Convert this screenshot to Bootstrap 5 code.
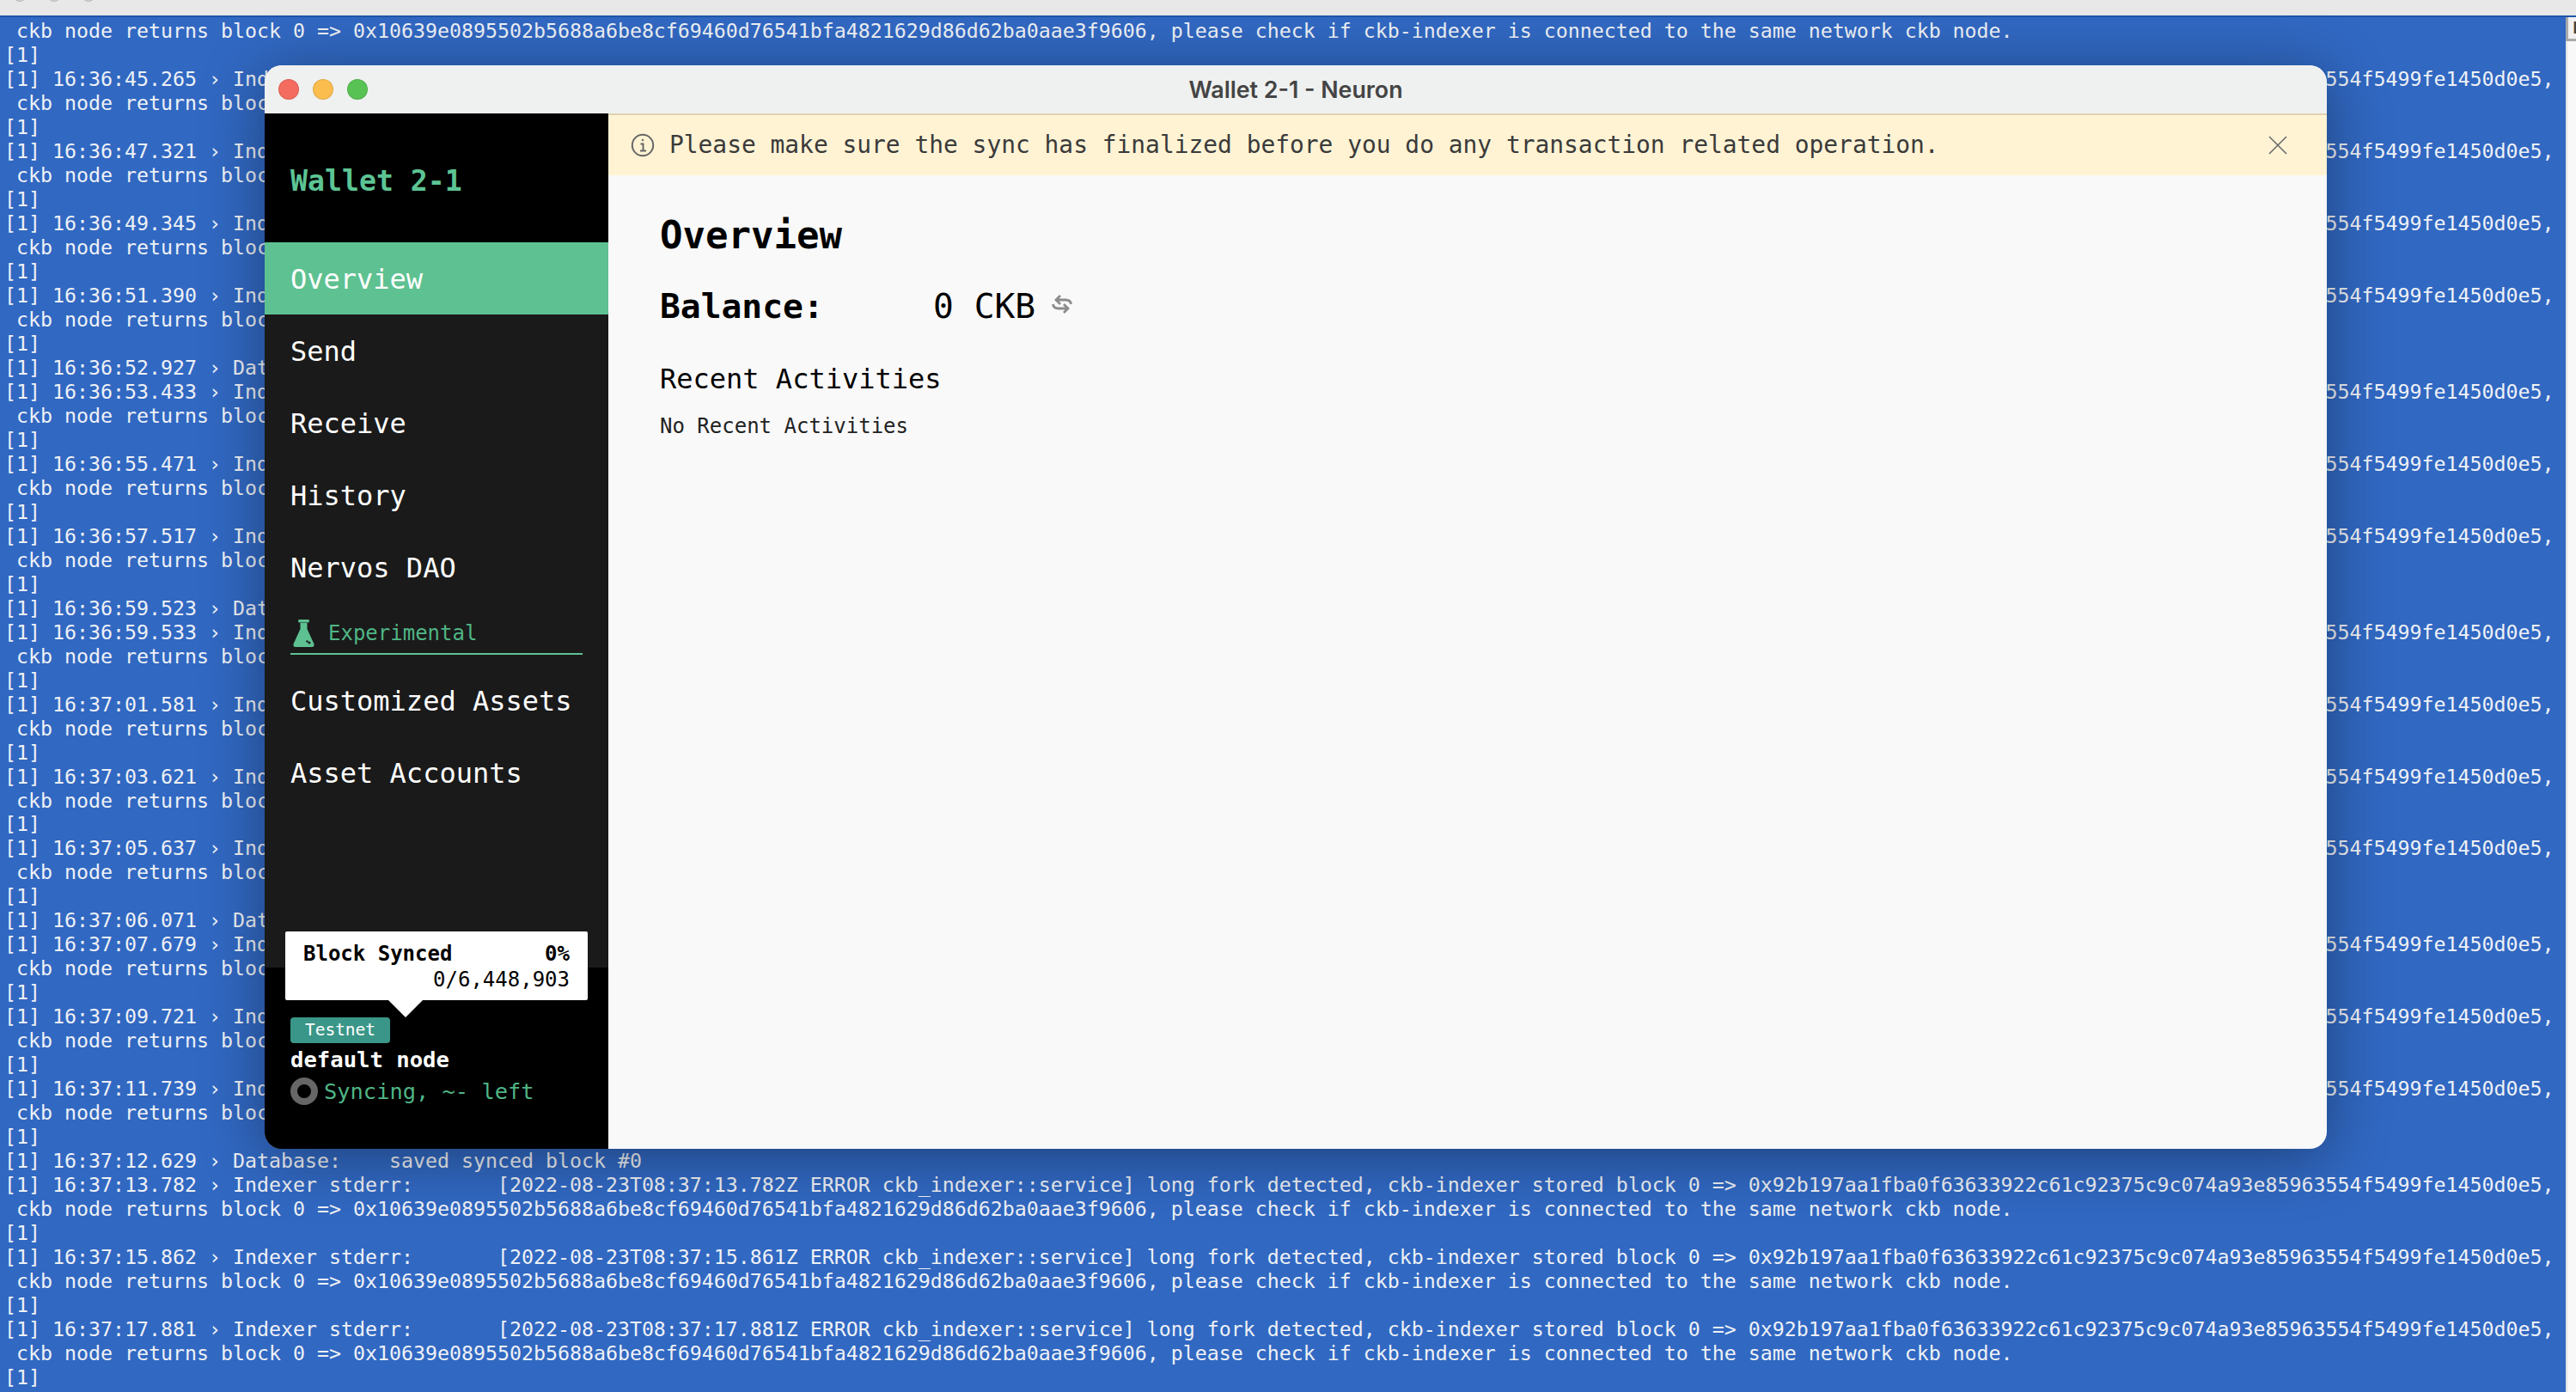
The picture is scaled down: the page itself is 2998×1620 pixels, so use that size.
<!DOCTYPE html>
<html lang="en">
  <head>
    <meta charset="UTF-8" />
    <meta name="viewport" content="width=device-width, initial-scale=1.0" />
    <title>Wallet 2-1 - Neuron</title>
    <link href="https://cdn.jsdelivr.net/npm/bootstrap@5.3.0/dist/css/bootstrap.min.css" rel="stylesheet" />
    <style>
      html, body { height: 100%; overflow: hidden; }
      body { background: #f5f5f5; font-family: "DejaVu Sans Mono", monospace; }

      /* Terminal behind the app window */
      .top-strip { height: 18px; background: #e7e8e7; position: relative; flex: none; padding-left: 15px; gap: 24px; }
      .top-strip i { width: 16px; height: 16px; margin-top: -14px; border-radius: 50%; background: #d4d5d4; border: 1px solid #b5b5b5; display: block; }
      .term-wrap { border-top: 2px solid #1f55aa; min-height: 0; }
      .term-side { width: 12px; background: #f8f8f8; border-left: 2px solid #e2e2e2; }
      .term-side span { display: block; height: 28px; margin-left: -2px; border-left: 3px solid #aaa; border-bottom: 3px solid #aaa; background: #f0f0f0; color: #444; font-size: 20px; font-weight: 700; line-height: 24px; overflow: hidden; padding-left: 5px; }
      .term-log {
        margin: 0;
        padding: 2px 0 0 5px;
        background: #3168c2;
        color: #eef1f6;
        font-family: "DejaVu Sans Mono", monospace;
        font-size: 23.25px;
        line-height: 27.98px;
        white-space: pre;
        overflow: hidden;
      }

      /* App window */
      .app-win {
        position: absolute;
        left: 308px;
        top: 76px;
        width: 2400px;
        height: 1261px;
        border-radius: 20px;
        overflow: hidden;
        box-shadow: 0 10px 70px rgba(0, 0, 0, 0.38);
        background: #f9f9f9;
      }
      .win-title { height: 56px; background: #eff1f0; position: relative; flex: none; }
      .win-title h1 { font-family: Inter, "Liberation Sans", sans-serif; font-size: 26.8px; font-weight: 600; color: #444; margin: 0; }
      .light { width: 24px; height: 24px; border-radius: 50%; border: 1px solid rgba(0, 0, 0, 0.1); }
      .lights { position: absolute; left: 16px; top: 16px; gap: 16px; }

      .side-bar { width: 400px; background: #1a1a1a; color: #fff; flex: none; }
      .side-head { height: 150px; background: #000; padding: 7px 30px 0; color: #5cc494; font-size: 33.2px; font-weight: 700; }
      .side-bar .nav-link { height: 84px; padding: 1px 30px 0; font-size: 32px; color: #fff; display: flex; align-items: center; }
      .side-bar .nav-link.is-on { background: #5ec191; }
      .exp-head { height: 60px; margin: 0 30px 11px; border-bottom: 2px solid #5ec191; color: #4fb585; font-size: 24px; gap: 16px; padding-top: 12px; }
      .exp-head svg { margin-left: 3px; }
      .side-foot { height: 211px; background: #000; padding: 58px 30px 0; position: relative; }
      .sync-pop {
        position: absolute;
        left: 24px;
        top: -42px;
        width: 352px;
        height: 80px;
        background: #fff;
        color: #000;
        border-radius: 2px;
        padding: 11px 21px 0;
        font-size: 24px;
        line-height: 30px;
      }
      .sync-pop::after {
        content: "";
        position: absolute;
        left: 120px;
        top: 80px;
        border: 20px solid transparent;
        border-top-color: #fff;
        border-bottom: 0;
      }
      .net-tag { width: 116px; height: 30px; background: #3a9688; border-radius: 4px; color: #fff; font-size: 19.5px; font-weight: 400; line-height: 30px; display: block; padding: 0; text-align: center; }
      .node-name { font-size: 25.6px; font-weight: 700; line-height: 32px; margin-top: 3px; color: #fff; }
      .sync-line { color: #4fb585; font-size: 25.4px; line-height: 32px; gap: 7px; margin-top: 5px; }
      .sync-ring { width: 32px; height: 32px; border: 8px solid #666; border-radius: 50%; flex: none; }

      .note-bar { height: 72px; background: #fff3d4; border-top: 2px solid #dfd2b2; padding: 0 46px 0 26px; color: #3a3a3a; font-size: 27.9px; gap: 17px; flex: none; }
      .page-body { padding: 43px 0 0 60px; color: #000; }
      .page-body h2 { font-size: 44px; font-weight: 700; line-height: 53px; margin: 0 0 33px; }
      .bal-line { font-size: 39.6px; line-height: 47px; margin-bottom: 42px; }
      .bal-line b { width: 318px; }
      .bal-line svg { margin: 0 0 6px 19px; }
      .page-body h3 { font-size: 32px; font-weight: 400; line-height: 38px; margin: 0 0 21px; }
      .page-body p { font-size: 24px; line-height: 30px; margin: 0; color: #222; }
    </style>
  </head>
  <body class="d-flex flex-column">
    <div class="top-strip d-flex">
      <i></i><i></i><i></i>
    </div>
    <div class="term-wrap d-flex flex-grow-1">
      <pre class="term-log flex-grow-1"> ckb node returns block 0 => 0x10639e0895502b5688a6be8cf69460d76541bfa4821629d86d62ba0aae3f9606, please check if ckb-indexer is connected to the same network ckb node.
[1]
[1] 16:36:45.265 › Indexer stderr:       [2022-08-23T08:36:45.265Z ERROR ckb_indexer::service] long fork detected, ckb-indexer stored block 0 => 0x92b197aa1fba0f63633922c61c92375c9c074a93e85963554f5499fe1450d0e5,
 ckb node returns block 0 => 0x10639e0895502b5688a6be8cf69460d76541bfa4821629d86d62ba0aae3f9606, please check if ckb-indexer is connected to the same network ckb node.
[1]
[1] 16:36:47.321 › Indexer stderr:       [2022-08-23T08:36:47.321Z ERROR ckb_indexer::service] long fork detected, ckb-indexer stored block 0 => 0x92b197aa1fba0f63633922c61c92375c9c074a93e85963554f5499fe1450d0e5,
 ckb node returns block 0 => 0x10639e0895502b5688a6be8cf69460d76541bfa4821629d86d62ba0aae3f9606, please check if ckb-indexer is connected to the same network ckb node.
[1]
[1] 16:36:49.345 › Indexer stderr:       [2022-08-23T08:36:49.345Z ERROR ckb_indexer::service] long fork detected, ckb-indexer stored block 0 => 0x92b197aa1fba0f63633922c61c92375c9c074a93e85963554f5499fe1450d0e5,
 ckb node returns block 0 => 0x10639e0895502b5688a6be8cf69460d76541bfa4821629d86d62ba0aae3f9606, please check if ckb-indexer is connected to the same network ckb node.
[1]
[1] 16:36:51.390 › Indexer stderr:       [2022-08-23T08:36:51.390Z ERROR ckb_indexer::service] long fork detected, ckb-indexer stored block 0 => 0x92b197aa1fba0f63633922c61c92375c9c074a93e85963554f5499fe1450d0e5,
 ckb node returns block 0 => 0x10639e0895502b5688a6be8cf69460d76541bfa4821629d86d62ba0aae3f9606, please check if ckb-indexer is connected to the same network ckb node.
[1]
[1] 16:36:52.927 › Database:    saved synced block #0
[1] 16:36:53.433 › Indexer stderr:       [2022-08-23T08:36:53.433Z ERROR ckb_indexer::service] long fork detected, ckb-indexer stored block 0 => 0x92b197aa1fba0f63633922c61c92375c9c074a93e85963554f5499fe1450d0e5,
 ckb node returns block 0 => 0x10639e0895502b5688a6be8cf69460d76541bfa4821629d86d62ba0aae3f9606, please check if ckb-indexer is connected to the same network ckb node.
[1]
[1] 16:36:55.471 › Indexer stderr:       [2022-08-23T08:36:55.471Z ERROR ckb_indexer::service] long fork detected, ckb-indexer stored block 0 => 0x92b197aa1fba0f63633922c61c92375c9c074a93e85963554f5499fe1450d0e5,
 ckb node returns block 0 => 0x10639e0895502b5688a6be8cf69460d76541bfa4821629d86d62ba0aae3f9606, please check if ckb-indexer is connected to the same network ckb node.
[1]
[1] 16:36:57.517 › Indexer stderr:       [2022-08-23T08:36:57.517Z ERROR ckb_indexer::service] long fork detected, ckb-indexer stored block 0 => 0x92b197aa1fba0f63633922c61c92375c9c074a93e85963554f5499fe1450d0e5,
 ckb node returns block 0 => 0x10639e0895502b5688a6be8cf69460d76541bfa4821629d86d62ba0aae3f9606, please check if ckb-indexer is connected to the same network ckb node.
[1]
[1] 16:36:59.523 › Database:    saved synced block #0
[1] 16:36:59.533 › Indexer stderr:       [2022-08-23T08:36:59.533Z ERROR ckb_indexer::service] long fork detected, ckb-indexer stored block 0 => 0x92b197aa1fba0f63633922c61c92375c9c074a93e85963554f5499fe1450d0e5,
 ckb node returns block 0 => 0x10639e0895502b5688a6be8cf69460d76541bfa4821629d86d62ba0aae3f9606, please check if ckb-indexer is connected to the same network ckb node.
[1]
[1] 16:37:01.581 › Indexer stderr:       [2022-08-23T08:37:01.581Z ERROR ckb_indexer::service] long fork detected, ckb-indexer stored block 0 => 0x92b197aa1fba0f63633922c61c92375c9c074a93e85963554f5499fe1450d0e5,
 ckb node returns block 0 => 0x10639e0895502b5688a6be8cf69460d76541bfa4821629d86d62ba0aae3f9606, please check if ckb-indexer is connected to the same network ckb node.
[1]
[1] 16:37:03.621 › Indexer stderr:       [2022-08-23T08:37:03.621Z ERROR ckb_indexer::service] long fork detected, ckb-indexer stored block 0 => 0x92b197aa1fba0f63633922c61c92375c9c074a93e85963554f5499fe1450d0e5,
 ckb node returns block 0 => 0x10639e0895502b5688a6be8cf69460d76541bfa4821629d86d62ba0aae3f9606, please check if ckb-indexer is connected to the same network ckb node.
[1]
[1] 16:37:05.637 › Indexer stderr:       [2022-08-23T08:37:05.637Z ERROR ckb_indexer::service] long fork detected, ckb-indexer stored block 0 => 0x92b197aa1fba0f63633922c61c92375c9c074a93e85963554f5499fe1450d0e5,
 ckb node returns block 0 => 0x10639e0895502b5688a6be8cf69460d76541bfa4821629d86d62ba0aae3f9606, please check if ckb-indexer is connected to the same network ckb node.
[1]
[1] 16:37:06.071 › Database:    saved synced block #0
[1] 16:37:07.679 › Indexer stderr:       [2022-08-23T08:37:07.679Z ERROR ckb_indexer::service] long fork detected, ckb-indexer stored block 0 => 0x92b197aa1fba0f63633922c61c92375c9c074a93e85963554f5499fe1450d0e5,
 ckb node returns block 0 => 0x10639e0895502b5688a6be8cf69460d76541bfa4821629d86d62ba0aae3f9606, please check if ckb-indexer is connected to the same network ckb node.
[1]
[1] 16:37:09.721 › Indexer stderr:       [2022-08-23T08:37:09.721Z ERROR ckb_indexer::service] long fork detected, ckb-indexer stored block 0 => 0x92b197aa1fba0f63633922c61c92375c9c074a93e85963554f5499fe1450d0e5,
 ckb node returns block 0 => 0x10639e0895502b5688a6be8cf69460d76541bfa4821629d86d62ba0aae3f9606, please check if ckb-indexer is connected to the same network ckb node.
[1]
[1] 16:37:11.739 › Indexer stderr:       [2022-08-23T08:37:11.739Z ERROR ckb_indexer::service] long fork detected, ckb-indexer stored block 0 => 0x92b197aa1fba0f63633922c61c92375c9c074a93e85963554f5499fe1450d0e5,
 ckb node returns block 0 => 0x10639e0895502b5688a6be8cf69460d76541bfa4821629d86d62ba0aae3f9606, please check if ckb-indexer is connected to the same network ckb node.
[1]
[1] 16:37:12.629 › Database:    saved synced block #0
[1] 16:37:13.782 › Indexer stderr:       [2022-08-23T08:37:13.782Z ERROR ckb_indexer::service] long fork detected, ckb-indexer stored block 0 => 0x92b197aa1fba0f63633922c61c92375c9c074a93e85963554f5499fe1450d0e5,
 ckb node returns block 0 => 0x10639e0895502b5688a6be8cf69460d76541bfa4821629d86d62ba0aae3f9606, please check if ckb-indexer is connected to the same network ckb node.
[1]
[1] 16:37:15.862 › Indexer stderr:       [2022-08-23T08:37:15.861Z ERROR ckb_indexer::service] long fork detected, ckb-indexer stored block 0 => 0x92b197aa1fba0f63633922c61c92375c9c074a93e85963554f5499fe1450d0e5,
 ckb node returns block 0 => 0x10639e0895502b5688a6be8cf69460d76541bfa4821629d86d62ba0aae3f9606, please check if ckb-indexer is connected to the same network ckb node.
[1]
[1] 16:37:17.881 › Indexer stderr:       [2022-08-23T08:37:17.881Z ERROR ckb_indexer::service] long fork detected, ckb-indexer stored block 0 => 0x92b197aa1fba0f63633922c61c92375c9c074a93e85963554f5499fe1450d0e5,
 ckb node returns block 0 => 0x10639e0895502b5688a6be8cf69460d76541bfa4821629d86d62ba0aae3f9606, please check if ckb-indexer is connected to the same network ckb node.
[1]</pre>
      <div class="term-side flex-shrink-0"><span>E</span></div>
    </div>

    <div class="app-win d-flex flex-column">
      <div class="win-title d-flex align-items-center justify-content-center">
        <div class="lights d-flex">
          <span class="light" style="background: #f46b5f"></span>
          <span class="light" style="background: #fabd4e"></span>
          <span class="light" style="background: #58c354"></span>
        </div>
        <h1>Wallet 2-1 - Neuron</h1>
      </div>
      <div class="d-flex flex-grow-1">
        <div class="side-bar d-flex flex-column">
          <div class="side-head d-flex align-items-center">Wallet 2-1</div>
          <nav class="nav flex-column">
            <a class="nav-link is-on" href="#">Overview</a>
            <a class="nav-link" href="#">Send</a>
            <a class="nav-link" href="#">Receive</a>
            <a class="nav-link" href="#">History</a>
            <a class="nav-link" href="#">Nervos DAO</a>
            <div class="exp-head d-flex align-items-center">
              <svg width="25" height="32" viewBox="0 0 25 32" class="flex-shrink-0">
                <rect x="6" y="0" width="13" height="3.500" rx="1.500" fill="#5ec191" />
                <path d="M8.500 4h8v7l8 17.500q.5 3.500-2.500 3.500H3Q0 32 .5 28.500l8-17.500z" fill="#5ec191" />
                <circle cx="16.500" cy="25.500" r="1.300" fill="#1a1a1a" />
                <circle cx="19" cy="27" r="1.500" fill="#1a1a1a" />
              </svg>
              <span>Experimental</span>
            </div>
            <a class="nav-link" href="#">Customized Assets</a>
            <a class="nav-link" href="#">Asset Accounts</a>
          </nav>
          <div class="side-foot mt-auto">
            <div class="sync-pop">
              <div class="d-flex justify-content-between fw-bold"><span>Block Synced</span><span>0%</span></div>
              <div class="text-end">0/6,448,903</div>
            </div>
            <span class="badge net-tag">Testnet</span>
            <div class="node-name">default node</div>
            <div class="sync-line d-flex align-items-center">
              <span class="sync-ring"></span>
              <span>Syncing, ~- left</span>
            </div>
          </div>
        </div>
        <div class="d-flex flex-column flex-grow-1">
          <div class="note-bar d-flex align-items-center">
            <svg width="28" height="28" viewBox="0 0 28 28" class="flex-shrink-0" fill="none" stroke="#666" stroke-width="2">
              <circle cx="14" cy="14" r="12.200" />
              <path d="M11.500 12.500H14.500V20M11 20.500h7" />
              <circle cx="14" cy="8" r="1.200" fill="#666" stroke="none" />
            </svg>
            <span class="flex-grow-1">Please make sure the sync has finalized before you do any transaction related operation.</span>
            <svg width="22" height="22" viewBox="0 0 22 22" class="flex-shrink-0" stroke="#666" stroke-width="1.500">
              <path d="M1 1l20 20M21 1L1 21" />
            </svg>
          </div>
          <div class="page-body">
            <h2>Overview</h2>
            <div class="bal-line d-flex align-items-center">
              <b>Balance:</b>
              <span>0 CKB</span>
              <svg width="24" height="22" viewBox="0 0 24 22" fill="none" stroke="#8c8c8c" stroke-width="2.800">
                <path d="M10 1L5 6l5 5M5.500 6H16q6 0 6.500 5M14 11l5 5-5 5M18.500 16H8q-6 0-6.500-5" />
              </svg>
            </div>
            <h3>Recent Activities</h3>
            <p>No Recent Activities</p>
          </div>
        </div>
      </div>
    </div>
    <script src="https://cdn.jsdelivr.net/npm/bootstrap@5.3.0/dist/js/bootstrap.bundle.min.js"></script>
  </body>
</html>
